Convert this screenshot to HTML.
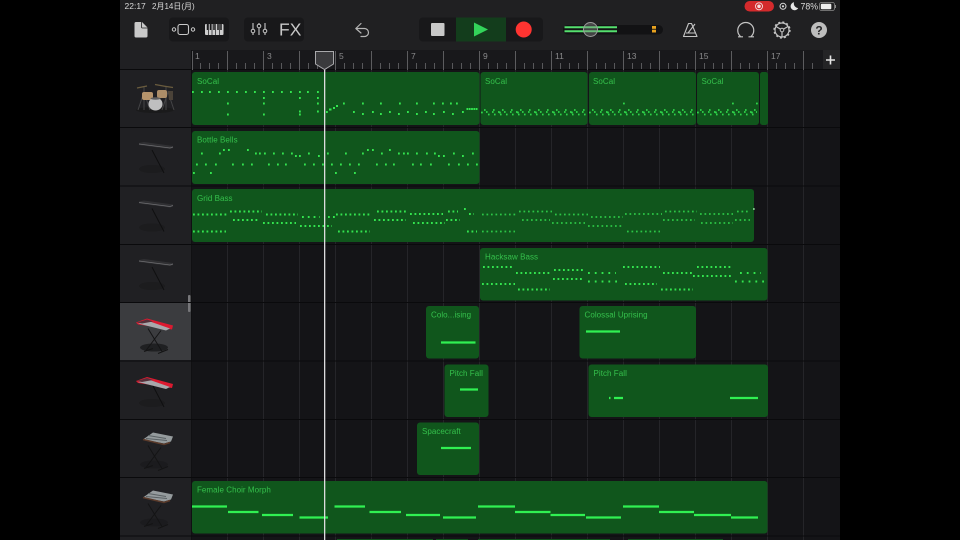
<!DOCTYPE html>
<html><head><meta charset="utf-8"><style>
html,body{margin:0;padding:0;background:#000;width:960px;height:540px;overflow:hidden}
svg{display:block;filter:blur(.35px)}
text{font-family:"Liberation Sans","Noto Sans CJK JP",sans-serif}
.l{font-size:8px;fill:#35c04c;letter-spacing:.05px}
.r{font-size:8.5px;fill:#8a8a8c}
.n{stroke:#30f052;stroke-width:2.2;fill:none}
.d{stroke:#33e44f;stroke-width:2;fill:none;stroke-dasharray:1.8 2.7}
.e{stroke:#2cc546;stroke-width:1.8;fill:none;stroke-dasharray:1.7 2.8}
.w{stroke:#33e44f;stroke-width:2;fill:none;stroke-dasharray:1.8 5}
</style></head><body>
<svg width="960" height="540" viewBox="0 0 960 540" xmlns="http://www.w3.org/2000/svg">
<defs>
<g id="stand1"><ellipse cx="32" cy="42" rx="13" ry="4" fill="#1c1c1e"/><path d="M32 23L44 46" stroke="#0f0f10" stroke-width="1"/></g>
<g id="stand2"><ellipse cx="34" cy="45" rx="14" ry="4" fill="#1b1b1d" fill-opacity=".85"/><path d="M28 26L42 49M41 28L26 48M24 49L33 46M38 51L48 47" stroke="#141415" stroke-width="1" fill="none"/></g>
<g id="kb"><use href="#stand1"/><path d="M19 16L24 15L53 19L53 21L50 22L19 18Z" fill="#303033"/><path d="M19 17L50 21L53 20" stroke="#6e6e71" stroke-width=".7" fill="none"/></g>
<g id="red"><path d="M16 20L27 16L53 23L52 27L18 22Z" fill="#dc1a30"/><path d="M18 21L30 19L50 26L46 28Z" fill="#a8a8ac"/><path d="M17 20L27 17L33 19L22 21Z" fill="#56303a"/></g>
<g id="grey"><path d="M23 20L33 13L53 17L51 22L44 24Z" fill="#959b9d"/><path d="M28 16L46 19M26 19L47 21" stroke="#5a6164" stroke-width=".9"/><path d="M23 20L44 25L50 23" stroke="#5a3a2a" stroke-width="1.500" fill="none"/></g>
</defs>
<rect width="960" height="540" fill="#000"/>
<rect x="120" width="720" height="540" fill="#141417"/>
<rect x="120" width="720" height="50" fill="#202022"/>
<rect x="120" y="50" width="72" height="490" fill="#202023"/>
<rect x="192" y="50" width="648" height="20" fill="#18181b"/>
<rect x="823" y="50" width="17" height="20" fill="#242426"/>
<rect x="120" y="303" width="71" height="57" fill="#3b3c3f"/>
<rect x="188" y="295" width="2.500" height="17" rx="1" fill="#77777a"/>
<rect x="191" y="50" width="1" height="490" fill="#101012"/>

<!-- grid -->
<path d="M227.500 70V540M263.500 70V540M299.500 70V540M335.500 70V540M371.500 70V540M407.500 70V540M443.500 70V540M479.500 70V540M515.500 70V540M551.500 70V540M587.500 70V540M623.500 70V540M659.500 70V540M695.500 70V540M731.500 70V540M767.500 70V540M803.500 70V540" stroke="#252529" stroke-width="1"/>
<path d="M120 69.500H840M120 127.500H840M120 186H840M120 244.500H840M120 302.500H840M120 361H840M120 419.500H840M120 477.500H840M120 536H840" stroke="#0a0a0c" stroke-width="1"/>

<!-- ruler ticks -->
<path d="M192.500 51V70M227.500 51V70M263.500 51V70M299.500 51V70M335.500 51V70M371.500 51V70M407.500 51V70M443.500 51V70M479.500 51V70M515.500 51V70M551.500 51V70M587.500 51V70M623.500 51V70M659.500 51V70M695.500 51V70M731.500 51V70M767.500 51V70M803.500 51V70" stroke="#5c5c5f" stroke-width="1"/>
<path d="M200.500 63V69M209.500 63V69M218.500 63V69M236.500 63V69M245.500 63V69M254.500 63V69M272.500 63V69M281.500 63V69M290.500 63V69M308.500 63V69M317.500 63V69M326.500 63V69M344.500 63V69M353.500 63V69M362.500 63V69M380.500 63V69M389.500 63V69M398.500 63V69M416.500 63V69M425.500 63V69M434.500 63V69M452.500 63V69M461.500 63V69M470.500 63V69M488.500 63V69M497.500 63V69M506.500 63V69M524.500 63V69M533.500 63V69M542.500 63V69M560.500 63V69M569.500 63V69M578.500 63V69M596.500 63V69M605.500 63V69M614.500 63V69M632.500 63V69M641.500 63V69M650.500 63V69M668.500 63V69M677.500 63V69M686.500 63V69M704.500 63V69M713.500 63V69M722.500 63V69M740.500 63V69M749.500 63V69M758.500 63V69M776.500 63V69M785.500 63V69M794.500 63V69M812.500 63V69" stroke="#58585b" stroke-width="1"/>
<text class="r" x="195" y="59">1</text><text class="r" x="267" y="59">3</text><text class="r" x="339" y="59">5</text><text class="r" x="411" y="59">7</text><text class="r" x="483" y="59">9</text><text class="r" x="555" y="59">11</text><text class="r" x="627" y="59">13</text><text class="r" x="699" y="59">15</text><text class="r" x="771" y="59">17</text>
<path d="M826 60H835M830.500 55.500V64.500" stroke="#e6e6e6" stroke-width="1.600"/>

<!-- regions -->
<g fill="#10561c">
<rect x="192" y="72" width="287.500" height="53" rx="3"/>
<rect x="480.500" y="72" width="107" height="53" rx="3"/>
<rect x="589" y="72" width="107" height="53" rx="3"/>
<rect x="697" y="72" width="62" height="53" rx="3"/>
<rect x="760" y="72" width="8" height="53" rx="2.500"/>
<rect x="192" y="131" width="287.500" height="53" rx="3"/>
<rect x="192" y="189" width="562" height="53" rx="3"/>
<rect x="480" y="248" width="287.500" height="52.500" rx="3"/>
<rect x="426" y="306" width="53" height="52.500" rx="3"/>
<rect x="579.500" y="306" width="116.500" height="52.500" rx="3"/>
<rect x="444.500" y="364.500" width="44" height="52.500" rx="3"/>
<rect x="588.500" y="364.500" width="179.500" height="52.500" rx="3"/>
<rect x="417" y="422.500" width="62" height="52.500" rx="3"/>
<rect x="192" y="481" width="575.500" height="52.500" rx="3"/>
<rect x="337" y="539" width="96" height="1"/><rect x="436" y="539" width="32" height="1"/><rect x="478" y="539" width="132" height="1"/><rect x="628" y="539" width="95" height="1"/>
</g>

<!-- labels -->
<text class="l" x="197" y="84">SoCal</text><text class="l" x="485" y="84">SoCal</text><text class="l" x="593" y="84">SoCal</text><text class="l" x="701.500" y="84">SoCal</text>
<text class="l" x="197" y="142.500">Bottle Bells</text>
<text class="l" x="197" y="201">Grid Bass</text>
<text class="l" x="485" y="259.500">Hacksaw Bass</text>
<text class="l" x="431" y="317.500">Colo...ising</text>
<text class="l" x="584.500" y="317.500">Colossal Uprising</text>
<text class="l" x="449.500" y="376">Pitch Fall</text>
<text class="l" x="593.500" y="376">Pitch Fall</text>
<text class="l" x="422" y="434">Spacecraft</text>
<text class="l" x="197" y="492.500">Female Choir Morph</text>

<!-- row 1 dots -->
<g stroke="#33e44f" stroke-width="2" fill="none">
<path d="M192 92h1.800M201 92h1.800M209 92h1.800M218 92h1.800M227 92h1.800M236 92h1.800M245 92h1.800M254 92h1.800M263 92h1.800M272 92h1.800M281 92h1.800M290 92h1.800M299 92h1.800M307 92h1.800M317 92h1.800"/>
<path d="M263 98h1.800M299 98h1.800M317 98h1.800M227 103.500h1.800M263 103.500h1.800M317 103.500h1.800M343 103.500h1.800M362 103.500h1.800M380 103.500h1.800M399 103.500h1.800M416 103.500h1.800M433 103.500h1.800M442 103.500h1.800M450 103.500h1.800M456 103.500h1.800"/>
<path d="M227 114.500h1.800M263 114.500h1.800M299 114.500h1.800M299 111.500h1.800M317 111.500h1.800M326 112h1.800M353 112h1.800M362 114h1.800M372 112h1.800M380 114h1.800M389 112h1.800M398 114h1.800M407 112h1.800M416 114h1.800M425 112h1.800M433 114h1.800M443 112h1.800M452 114h1.800M462 112h1.800M329 109.500h2.500M333 108h2M336 106h2"/>
<path d="M466.500 109H478" stroke-dasharray="1.800 .5"/>
<!-- row 2 -->
<path d="M201 153.500h1.800M219 153.500h1.800M255 153.500h1.800M259 153.500h1.800M264 153.500h1.800M273 153.500h1.800M282 153.500h1.800M291 153.500h1.800M308 153.500h1.800M327 153.500h1.800M345 153.500h1.800M362 153.500h1.800M381 153.500h1.800M398 153.500h1.800M403 153.500h1.800M407 153.500h1.800M416 153.500h1.800M426 153.500h1.800M434 153.500h1.800M453 153.500h1.800M472 153.500h1.800"/>
<path d="M223 150h1.800M228 150h1.800M247 150h1.800M367 150h1.800M372 150h1.800M389 150h1.800M295 156h1.800M299 156h1.800M318 156h1.800M438 156h1.800M443 156h1.800M462 156h1.800"/>
<path d="M196 164.500h1.800M205 164.500h1.800M215 164.500h1.800M232 164.500h1.800M242 164.500h1.800M251 164.500h1.800M268 164.500h1.800M277 164.500h1.800M285 164.500h1.800M304 164.500h1.800M313 164.500h1.800M322 164.500h1.800M331 164.500h1.800M340 164.500h1.800M349 164.500h1.800M358 164.500h1.800M376 164.500h1.800M385 164.500h1.800M393 164.500h1.800M412 164.500h1.800M420 164.500h1.800M430 164.500h1.800M448 164.500h1.800M458 164.500h1.800M467 164.500h1.800M476 164.500h1.800"/>
<path d="M193 173h1.800M210 173h1.800M335 173h1.800M354 173h1.800"/>
<path d="M464 209h1.800"/>
</g>
<!-- region 2-5 of row 1 -->
<g fill="none" stroke="#2fd44a" stroke-width="1.800">
<path d="M481 112.500H586M589 112.500H694M697 112.500H758" stroke-dasharray="1.800 16.200"/>
<path d="M484 110H586M592 110H694M700 110H757" stroke-dasharray="1.600 7.400"/>
<path d="M486 112H586M594 112H694M702 112H757" stroke-dasharray="1.600 4.400"/>
<path d="M488 114.500H586M596 114.500H694M704 114.500H757" stroke-dasharray="1.600 4.400"/>
<path d="M623 103.500h1.800M732 103.500h1.800M756 103.500h1.800"/>
</g>
<!-- row 3 -->
<path class="d" d="M193 214.500H228M266 214.500H298M336 214.500H372M410 214H443M469 214H474"/>
<path class="d" d="M230 211.500H262M377 211.500H408M448 211.500H458"/>
<path class="d" d="M233 220H260M374 220H406M446 220H460"/>
<path class="d" d="M263 223H296M413 223H445"/>
<path class="d" d="M300 226H332"/>
<path class="d" d="M193 231.500H226M338 231.500H370M467 231.500H477"/>
<path class="w" d="M302 217H320" style="stroke-dasharray:1.800 4"/>
<path class="d" d="M328 217H335" style="stroke-dasharray:1.800 3.200"/>
<path class="e" d="M482 214.500H517M555 214.500H588M625 214H662M700 214H733"/>
<path class="e" d="M519 211.500H552M665 211.500H697M737 211.500H748"/>
<path class="e" d="M591 217H623"/>
<path class="e" d="M522 220H550M663 220H695M735 220H750"/>
<path class="e" d="M552 223H585M701 223H733"/>
<path class="e" d="M588 226H622"/>
<path class="e" d="M482 231.500H515M627 231.500H660"/>
<path d="M753 209h1.700" stroke="#8fd89a" stroke-width="1.700"/>
<!-- row 4 -->
<path class="d" d="M483 267H513M623 267H660M697 267H733"/>
<path class="d" d="M554 270H583"/>
<path class="d" d="M516 273H550M663 273H692"/>
<path class="w" d="M588 273H616M740 273H761"/>
<path class="d" d="M693 276H732"/>
<path class="d" d="M553 279H582"/>
<path class="w" d="M588 281.500H617M735 281.500H764"/>
<path class="d" d="M482 284H515M625 284H657"/>
<path class="d" d="M518 289.500H550M661 289.500H693"/>
<!-- long notes -->
<path class="n" d="M441 342.500H475.500M586 331.500H620M460 389.500H478M609 398H610.500M614 398H623M730 398H758M441 448H471"/>
<path class="n" d="M192 506.500H227M228 512H258.500M262 515H293M299.500 517.500H328M334.500 506.500H365M369.500 512H401M406 515H440M443 517.500H476M478 506.500H515M515 512H550.500M550.500 515H585M586 517.500H621M623 506.500H659M659 512H694M694 515H731M731 517.500H758"/>

<!-- track icons -->
<!-- drums -->
<g>
<ellipse cx="155" cy="110" rx="19" ry="3" fill="#1a1a1b"/>
<path d="M138 110L144 92L150 110M162 110L168 92L174 110M144 86V110M166 86V110" stroke="#444446" stroke-width="1" fill="none"/>
<path d="M137 88L147 86M155 84.500L166 86.500M163 86L173 87.500" stroke="#6a5c3e" stroke-width="1.200" fill="none"/>
<rect x="142" y="92" width="11" height="8" rx="2" fill="#b6946c"/>
<rect x="157" y="90" width="10" height="8" rx="2" fill="#ac8d68"/>
<path d="M168 91h5v9h-4z" fill="#4a4238"/>
<ellipse cx="155.500" cy="104" rx="7" ry="6.500" fill="#bfbfc0"/>
<ellipse cx="155.500" cy="98.500" rx="5" ry="1.300" fill="#5f5f60"/>
</g>
<g>
<g transform="translate(120 127)"><use href="#kb"/></g>
<g transform="translate(120 185.500)"><use href="#kb"/></g>
<g transform="translate(120 244)"><use href="#kb"/></g>
<g transform="translate(120 302.500)"><use href="#stand2"/><use href="#red"/></g>
<g transform="translate(120 361)"><use href="#stand1"/><use href="#red"/></g>
<g transform="translate(120 419.500)"><use href="#stand2"/><use href="#grey"/></g>
<g transform="translate(120 477.500)"><use href="#stand2"/><use href="#grey"/></g>
</g>

<!-- playhead -->
<rect x="324" y="68" width="1.300" height="472" fill="#dcdcde"/>
<path d="M315.500 51.500H333.500V64L324.500 69.500L315.500 64Z" fill="#3a3a3d" stroke="#a8a8ab" stroke-width="1"/>

<!-- status bar -->
<text x="124.500" y="9" font-size="8.500" fill="#d8d8d8">22:17</text>
<text x="152" y="9" font-size="8" fill="#d8d8d8">2月14日(月)</text>
<rect x="744.500" y="1" width="29.500" height="10.500" rx="5.250" fill="#d42a2c"/>
<circle cx="759" cy="6.300" r="3.500" fill="none" stroke="#f4dede" stroke-width=".9"/><circle cx="759" cy="6.300" r="1.800" fill="#f4dede"/>
<circle cx="783" cy="6.300" r="3" fill="none" stroke="#ddd" stroke-width="1"/><circle cx="783" cy="6.300" r="1.100" fill="#ddd"/>
<path d="M794 2.300A4 4 0 1 0 798.200 8A4.500 4.500 0 0 1 794 2.300Z" fill="#e6e6e6"/>
<text x="800.500" y="9.500" font-size="8.800" fill="#d8d8d8">78%</text>
<rect x="819.500" y="2.500" width="15" height="8" rx="2" fill="none" stroke="#8a8a8a" stroke-width=".8"/><rect x="820.800" y="3.800" width="10.500" height="5.400" rx="1" fill="#eee"/><rect x="835" y="5" width="1" height="3" fill="#8a8a8a"/>

<!-- toolbar -->
<path d="M134.500 23.500Q134.500 22 136 22H142L147.500 27.500V36Q147.500 37.500 146 37.500H136Q134.500 37.500 134.500 36Z" fill="#c9c9c9"/>
<path d="M141.500 22V27Q141.500 28 142.500 28H147.500" fill="none" stroke="#202022" stroke-width=".8"/>
<rect x="169" y="17.500" width="60" height="24" rx="4" fill="#18181a"/>
<rect x="244" y="17.500" width="60" height="24" rx="4" fill="#18181a"/>
<circle cx="174" cy="29.500" r="1.700" fill="none" stroke="#c8c8c8" stroke-width="1"/>
<rect x="178" y="24.500" width="10.500" height="10" rx="2" fill="none" stroke="#c8c8c8" stroke-width="1.100"/>
<circle cx="193" cy="29.500" r="1.700" fill="none" stroke="#c8c8c8" stroke-width="1"/>
<rect x="205" y="24" width="18.500" height="11" rx="1" fill="#cfcfcf"/>
<path d="M208.500 24V35M212 24V35M215.500 24V35M219.500 24V35" stroke="#18181a" stroke-width=".7"/>
<path d="M207.500 24V30M210.500 24V30M214 24V30M218 24V30M221 24V30" stroke="#18181a" stroke-width="1.500"/>
<path d="M253 23V35M259 23V35M265 23V35" stroke="#c8c8c8" stroke-width="1.100"/>
<circle cx="253" cy="31" r="1.800" fill="#18181a" stroke="#c8c8c8"/><circle cx="259" cy="26" r="1.800" fill="#18181a" stroke="#c8c8c8"/><circle cx="265" cy="31" r="1.800" fill="#18181a" stroke="#c8c8c8"/>
<text x="279" y="35.500" font-size="17.500" fill="#c8c8c8">FX</text>
<path d="M361 23.500L355.800 28.500L361 33M356.500 28.500H364.500A4 4 0 0 1 364.500 36.500H361" fill="none" stroke="#b4b4b4" stroke-width="1.200" stroke-linecap="round" stroke-linejoin="round"/>
<rect x="419" y="17.500" width="124" height="24" rx="4" fill="#18181a"/>
<rect x="456" y="17.500" width="50" height="24" fill="#133d1c"/>
<rect x="431" y="23" width="13.500" height="13" rx="1" fill="#c8c8c8"/>
<path d="M474 22.500L488 29.500L474 36.500Z" fill="#33d45a"/>
<circle cx="523.700" cy="29.500" r="8" fill="#ff3431"/>
<rect x="563" y="25" width="100" height="9.500" rx="4.700" fill="#121214"/>
<path d="M564.500 27.300H617M564.500 31.300H617" stroke="#55e06e" stroke-width="2"/>
<circle cx="590.500" cy="29.500" r="7" fill="#8a8a8a" fill-opacity=".4" stroke="#9a9a9a" stroke-width="1"/>
<rect x="652" y="26" width="4" height="2.800" fill="#e8a21f"/><rect x="652" y="29.700" width="4" height="2.800" fill="#e8a21f"/>
<path d="M688.500 23.500H691.500L697 36.500H683.500ZM686 33H695M688 33L695 24" fill="none" stroke="#c4c4c4" stroke-width="1.100" stroke-linejoin="round"/>
<path d="M740.500 36.500A8 8 0 1 1 751 36.500M738 36.800H743M748.500 36.800H754" fill="none" stroke="#c4c4c4" stroke-width="1.200"/>
<circle cx="782" cy="30" r="7" fill="none" stroke="#c4c4c4" stroke-width="1.200"/>
<circle cx="782" cy="30" r="8" fill="none" stroke="#c4c4c4" stroke-width="1.300" stroke-dasharray="2 2.200"/>
<path d="M782 30L776 26.500M782 30L788 26.500M782 30V37" stroke="#c4c4c4" stroke-width="1.200"/><circle cx="782" cy="30" r="1.800" fill="#202022" stroke="#c4c4c4" stroke-width="1"/>
<circle cx="819" cy="30" r="8" fill="#bdbdbd"/>
<text x="819" y="34.500" font-size="12" font-weight="bold" fill="#262628" text-anchor="middle">?</text>
</svg>
</body></html>
